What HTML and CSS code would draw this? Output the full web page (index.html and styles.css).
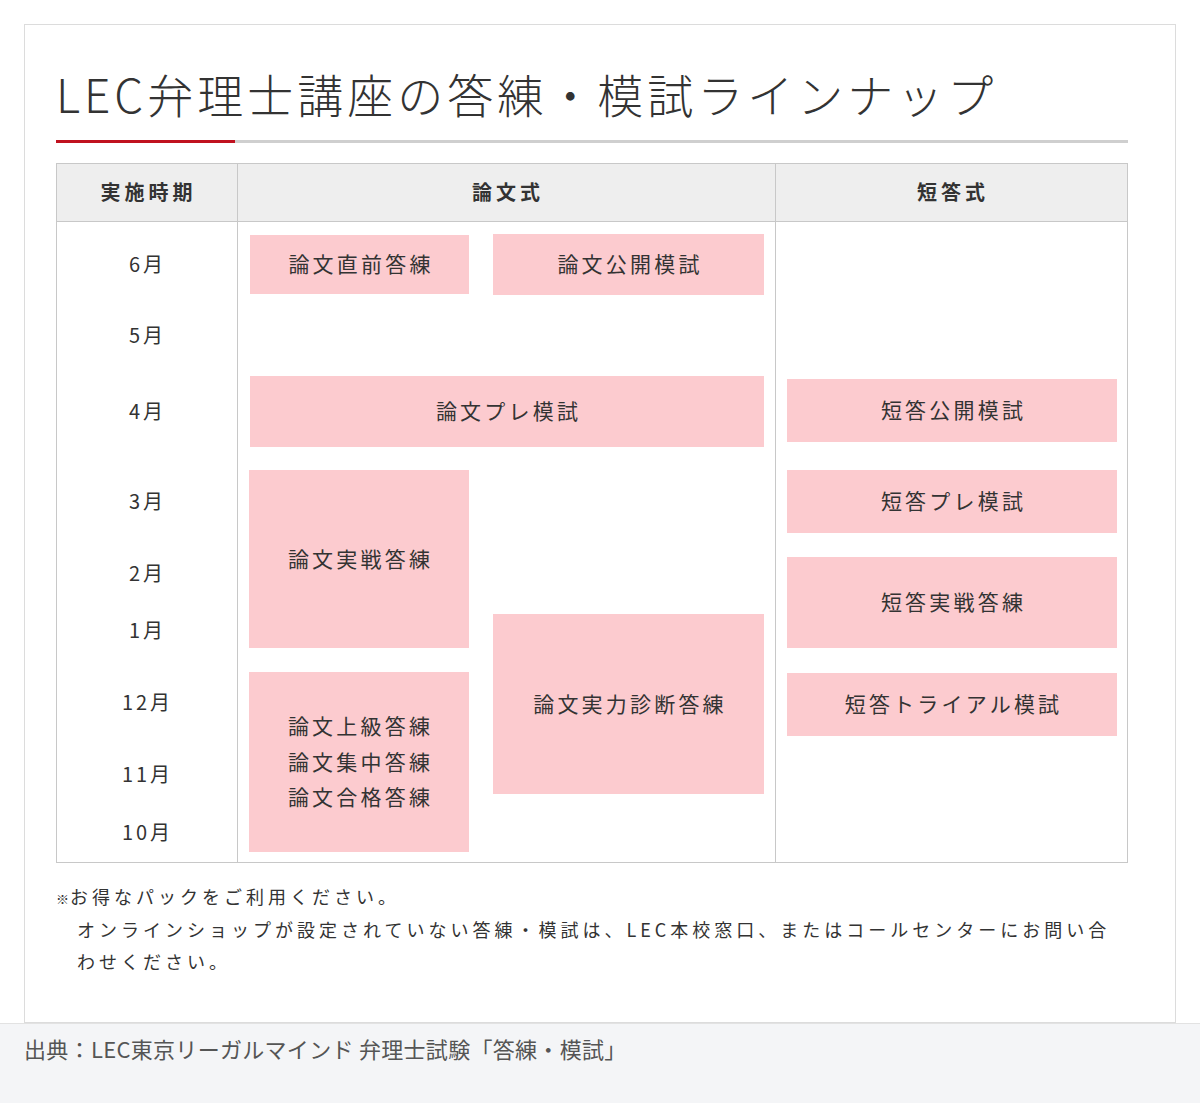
FILE: index.html
```html
<!DOCTYPE html>
<html lang="ja">
<head>
<meta charset="utf-8">
<title>LEC弁理士講座の答練・模試ラインナップ</title>
<link rel="stylesheet" href="styles.css">
</head>
<body>
<div class="wrap">
  <section class="card">
    <h1 class="title">LEC弁理士講座の答練・模試ラインナップ</h1>
    <div class="rule"></div>
    <div class="table">
      <div class="th c1">実施時期</div>
      <div class="th c2">論文式</div>
      <div class="th c3">短答式</div>

      <div class="months c1">
        <div class="m m6">6月</div>
        <div class="m m5">5月</div>
        <div class="m m4">4月</div>
        <div class="m m3">3月</div>
        <div class="m m2">2月</div>
        <div class="m m1">1月</div>
        <div class="m m12">12月</div>
        <div class="m m11">11月</div>
        <div class="m m10">10月</div>
      </div>

      <div class="ronbun c2">
        <div class="row-top">
          <div class="blk a">論文直前答練</div>
          <div class="blk b">論文公開模試</div>
        </div>
        <div class="blk c">論文プレ模試</div>
        <div class="row-bottom">
          <div class="col-l">
            <div class="blk d">論文実戦答練</div>
            <div class="blk f">論文上級答練<br>論文集中答練<br>論文合格答練</div>
          </div>
          <div class="col-r">
            <div class="blk e">論文実力診断答練</div>
          </div>
        </div>
      </div>

      <div class="tanto c3">
        <div class="blk g">短答公開模試</div>
        <div class="blk h">短答プレ模試</div>
        <div class="blk i">短答実戦答練</div>
        <div class="blk j">短答トライアル模試</div>
      </div>
    </div>
    <p class="note"><span class="kome">※</span>お得なパックをご利用ください。<br>オンラインショップが設定されていない答練・模試は、LEC本校窓口、またはコールセンターにお問い合わせください。</p>
  </section>
</div>
<footer class="source">出典：LEC東京リーガルマインド 弁理士試験「答練・模試」</footer>
</body>
</html>
```

FILE: styles.css
```css
* { box-sizing: border-box; }
html, body { margin: 0; padding: 0; background: #fff; }
body {
  font-family: "Noto Sans CJK JP", "Noto Sans", sans-serif;
  color: #333;
}
.wrap { padding: 24px 24px 0; }
.card {
  border: 1px solid #dcdcdc;
  padding: 36px 47px 44px 31px;
}
.title {
  margin: 0;
  font-size: 46px;
  line-height: 64px;
  font-weight: 300;
  letter-spacing: 4px;
  color: #333;
  white-space: nowrap;
}
.rule {
  margin-top: 15px;
  height: 3px;
  background: #cfcfcf;
  position: relative;
}
.rule::after {
  content: "";
  position: absolute;
  left: 0; top: 0;
  width: 179px; height: 3px;
  background: #c0111f;
}
.table {
  margin-top: 20px;
  border: 1px solid #c8c8c8;
  display: grid;
  grid-template-columns: 181px 538px 1fr;
}
.th {
  height: 58px;
  background: #eeeeee;
  border-bottom: 1px solid #c8c8c8;
  display: flex;
  align-items: center;
  justify-content: center;
  font-size: 20px;
  font-weight: 700;
  letter-spacing: 4px;
  padding: 0 0 3px 3px;
  color: #333;
}
.c1, .c2 { border-right: 1px solid #c8c8c8; }
.months { display: flex; flex-direction: column; }
.m {
  display: flex; align-items: center; justify-content: center;
  font-size: 20px; letter-spacing: 3px; padding: 0 0 1px 1px;
  color: #333;
}
.m6 { height: 84px; }
.m5 { height: 58px; }
.m4 { height: 94px; }
.m3 { height: 86px; }
.m2 { height: 58px; }
.m1 { height: 56px; }
.m12 { height: 88px; }
.m11 { height: 56px; }
.m10 { height: 60px; }

.blk {
  background: #fccbcf;
  display: flex; align-items: center; justify-content: center;
  text-align: center;
  font-size: 21px;
  letter-spacing: 3.2px;
  padding: 0 0 1px 3px;
  line-height: 35.5px;
  color: #333;
}
.ronbun { padding: 12px 11px 10px 12px; }
.row-top { display: flex; gap: 24px; align-items: flex-start; }
.a { width: 219px; height: 59px; margin-top: 1px; }
.b { width: 271px; height: 61px; }
.c { margin-top: 81px; height: 71px; }
.row-bottom { display: flex; gap: 24px; }
.col-l, .col-r { display: flex; flex-direction: column; }
.col-l { width: 220px; margin-left: -1px; }
.col-r { width: 271px; }
.d { margin-top: 23px; height: 178px; }
.f { margin-top: 24px; height: 180px; }
.e { margin-top: 167px; height: 180px; }

.tanto { padding: 0 10px 0 11px; display: flex; flex-direction: column; }
.g { margin-top: 157px; height: 63px; }
.h { margin-top: 28px; height: 63px; }
.i { margin-top: 24px; height: 91px; }
.j { margin-top: 25px; height: 63px; }

.note {
  margin: 17px 0 0;
  padding-left: 21px;
  text-indent: -21px;
  font-size: 18px;
  line-height: 32.5px;
  letter-spacing: 4px;
  color: #333;
}
.kome { font-size: 13px; line-height: 1; letter-spacing: 1px; font-weight: 700; }

.source {
  background: #f4f5f7;
  border-top: 1px solid #e2e2e2;
  padding: 9px 24px 40px;
  font-size: 22px;
  line-height: 30px;
  color: #555;
  letter-spacing: 0.3px;
  height: 81px;
}
```
